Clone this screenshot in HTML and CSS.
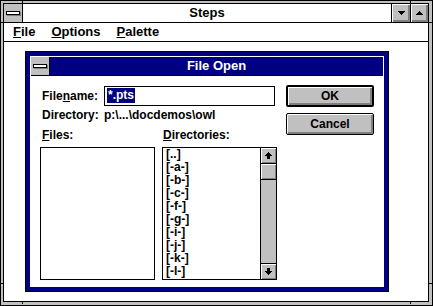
FILE: index.html
```html
<!DOCTYPE html>
<html lang="en">
<head>
    <meta charset="UTF-8">
    <title>Steps</title>
    <link rel="stylesheet" href="styles.css">
</head>
<body>
    <div class="window">
        <div class="frame">
            <!-- Caption -->
            <div class="titlebar">
                <div class="sysbox"><span class="sysbar"></span></div>
                <div class="title">Steps</div>
                <div class="tbtn">
                    <svg width="7" height="4" viewBox="0 0 7 4" shape-rendering="crispEdges"><rect x="0" y="0" width="7" height="1"/><rect x="1" y="1" width="5" height="1"/><rect x="2" y="2" width="3" height="1"/><rect x="3" y="3" width="1" height="1"/></svg>
                </div>
                <div class="tbtn max">
                    <svg width="7" height="4" viewBox="0 0 7 4" shape-rendering="crispEdges"><rect x="3" y="0" width="1" height="1"/><rect x="2" y="1" width="3" height="1"/><rect x="1" y="2" width="5" height="1"/><rect x="0" y="3" width="7" height="1"/></svg>
                </div>
            </div>

            <!-- Menu -->
            <div class="menubar">
                <span class="menu"><u>F</u>ile</span>
                <span class="menu"><u>O</u>ptions</span>
                <span class="menu"><u>P</u>alette</span>
            </div>

            <div class="client">
                <div class="dialog">
                    <div class="dlg-inner">
                        <div class="dlg-title">
                            <div class="sysbox"><span class="sysbar"></span></div>
                            <div class="title">File Open</div>
                        </div>

                        <div class="dlg-body">
                            <div class="fields">
                                <div class="row row-name">
                                    <span class="lbl">File<u>n</u>ame:</span>
                                    <div class="edit"><span class="sel">*.pts</span></div>
                                </div>
                                <div class="row row-dir">
                                    <span class="lbl">Directory:</span>
                                    <span>p:\...\docdemos\owl</span>
                                </div>
                                <div class="lists">
                                    <div class="col">
                                        <div class="cap"><u>F</u>iles:</div>
                                        <div class="listbox"></div>
                                    </div>
                                    <div class="col">
                                        <div class="cap cap-dir"><u>D</u>irectories:</div>
                                        <div class="listbox dirs">
                                            <ul>
                                                <li>[..]</li>
                                                <li>[-a-]</li>
                                                <li>[-b-]</li>
                                                <li>[-c-]</li>
                                                <li>[-f-]</li>
                                                <li>[-g-]</li>
                                                <li>[-i-]</li>
                                                <li>[-j-]</li>
                                                <li>[-k-]</li>
                                                <li>[-l-]</li>
                                            </ul>
                                            <div class="vscroll">
                                                <div class="sbtn">
                                                    <svg width="7" height="7" viewBox="0 0 7 7" shape-rendering="crispEdges"><rect x="3" y="0" width="1" height="1"/><rect x="2" y="1" width="3" height="1"/><rect x="1" y="2" width="5" height="1"/><rect x="0" y="3" width="7" height="1"/><rect x="2" y="4" width="3" height="3"/></svg>
                                                </div>
                                                <div class="sbtn thumb"></div>
                                                <div class="track"></div>
                                                <div class="sbtn down">
                                                    <svg width="7" height="7" viewBox="0 0 7 7" shape-rendering="crispEdges"><rect x="2" y="0" width="3" height="3"/><rect x="0" y="3" width="7" height="1"/><rect x="1" y="4" width="5" height="1"/><rect x="2" y="5" width="3" height="1"/><rect x="3" y="6" width="1" height="1"/></svg>
                                                </div>
                                            </div>
                                        </div>
                                    </div>
                                </div>
                            </div>

                            <div class="buttons">
                                <button class="btn default">OK</button>
                                <button class="btn">Cancel</button>
                            </div>
                        </div>
                    </div>
                </div>
            </div>
        </div>

        <!-- Sizing border corner marks -->
        <span class="tick tick-v" style="left:21px; top:-1px;"></span>
        <span class="tick tick-v" style="left:409px; top:-1px;"></span>
        <span class="tick tick-v" style="left:21px; top:300px;"></span>
        <span class="tick tick-v" style="left:409px; top:300px;"></span>
        <span class="tick tick-h" style="left:-1px; top:21px;"></span>
        <span class="tick tick-h" style="left:-1px; top:282px;"></span>
        <span class="tick tick-h tick-r" style="left:427px; top:21px;"></span>
        <span class="tick tick-h tick-r" style="left:427px; top:282px;"></span>
    </div>
</body>
</html>
```

FILE: styles.css
```css
body {
    margin: 0;
    font-family: "Liberation Sans", Arial, sans-serif;
    font-weight: bold;
    color: #000;
}

u {
    text-decoration-thickness: 1px;
    text-underline-offset: 1px;
}

/* Main window */
.window {
    position: relative;
    width: 433px;
    height: 306px;
    box-sizing: border-box;
    border: 1px solid #000;
    padding: 2px 3px 3px 2px;
    background-color: #c0c0c0;
}

.frame {
    height: 100%;
    box-sizing: border-box;
    border: 1px solid #000;
    display: flex;
    flex-direction: column;
    background-color: #fff;
}

.titlebar {
    height: 18px;
    flex: none;
    display: flex;
    border-bottom: 1px solid #000;
}

.sysbox {
    width: 18px;
    flex: none;
    background-color: #c0c0c0;
    border-right: 1px solid #000;
    display: flex;
    align-items: center;
    justify-content: center;
}

.sysbar {
    width: 12px;
    height: 2px;
    border: 1px solid #000;
    background-color: #fff;
    box-shadow: 1px 1px 0 #808080;
}

.title {
    flex: 1;
    text-align: center;
    font-size: 13px;
    line-height: 18px;
}

.tbtn {
    width: 18px;
    flex: none;
    border-left: 1px solid #000;
    background-color: #c0c0c0;
    box-shadow: inset 1px 1px 0 #fff, inset -2px -2px 0 #808080;
    display: flex;
    align-items: center;
    justify-content: center;
}

.tbtn.max {
    width: 17px;
}

.menubar {
    height: 18px;
    flex: none;
    display: flex;
    padding-left: 1px;
    border-bottom: 1px solid #000;
    font-size: 13px;
    line-height: 18px;
}

.menu {
    padding: 0 8px;
}

.client {
    flex: 1;
    padding: 9px 0 0 21px;
}

/* File Open dialog */
.dialog {
    width: 364px;
    height: 241px;
    box-sizing: border-box;
    border: 1px solid #000;
    padding: 4px;
    background-color: #000080;
}

.dlg-inner {
    height: 100%;
    box-sizing: border-box;
    padding: 1px;
    background-color: #fff;
    display: flex;
    flex-direction: column;
}

.dlg-title {
    height: 18px;
    flex: none;
    display: flex;
    background-color: #000080;
    border-bottom: 1px solid #000;
    color: #fff;
}

.dlg-body {
    display: flex;
    padding: 9px 0 0 9px;
    font-size: 12px;
}

.fields {
    width: 237px;
    padding-top: 1px;
}

.row {
    display: flex;
}

.lbl {
    width: 62px;
    padding-left: 2px;
}

.row-name {
    height: 20px;
    line-height: 20px;
}

.edit {
    width: 171px;
    height: 20px;
    box-sizing: border-box;
    border: 1px solid #000;
    padding: 1px 0 0 2px;
    line-height: 15px;
}

.sel {
    display: inline-block;
    padding: 0 1px;
    background-color: #000080;
    color: #fff;
}

.row-dir {
    margin-top: 2px;
    line-height: 14px;
}

.lists {
    display: flex;
    gap: 7px;
    margin-top: 6px;
}

.cap {
    line-height: 14px;
    margin-bottom: 5px;
    padding-left: 2px;
}

.cap-dir {
    padding-left: 1px;
}

.listbox {
    width: 115px;
    height: 133px;
    box-sizing: border-box;
    border: 1px solid #000;
}

.dirs {
    display: flex;
}

.dirs ul {
    flex: 1;
    margin: 0;
    padding: 0 0 0 3px;
    list-style: none;
    line-height: 13px;
    overflow: hidden;
}

.vscroll {
    width: 16px;
    flex: none;
    box-sizing: border-box;
    border-left: 1px solid #000;
    background-color: #c0c0c0;
    display: flex;
    flex-direction: column;
}

.sbtn {
    height: 16px;
    flex: none;
    box-sizing: border-box;
    border-bottom: 1px solid #000;
    background-color: #c0c0c0;
    box-shadow: inset 1px 1px 0 #fff, inset -1px -1px 0 #808080;
    display: flex;
    align-items: center;
    justify-content: center;
}

.sbtn.down {
    border-bottom: none;
    border-top: 1px solid #000;
}

.track {
    flex: 1;
}

.buttons {
    margin-left: 9px;
    display: flex;
    flex-direction: column;
    gap: 6px;
}

.btn {
    width: 88px;
    height: 22px;
    box-sizing: border-box;
    border: 1px solid #000;
    border-radius: 2px;
    padding: 0;
    background-color: #c0c0c0;
    box-shadow: inset 1px 1px 0 #fff, inset -2px -2px 0 #808080;
    font-family: inherit;
    font-weight: bold;
    font-size: 12px;
    color: #000;
}

.btn.default {
    border-width: 2px;
}

/* marks on the sizing border */
.tick {
    position: absolute;
    background-color: #000;
}

.tick-v {
    width: 1px;
    height: 3px;
}

.tick-h {
    width: 3px;
    height: 1px;
}

.tick-r {
    width: 4px;
}
```
